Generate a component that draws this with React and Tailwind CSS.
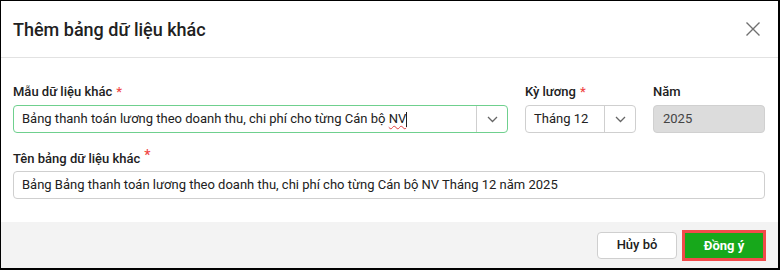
import React from 'react';

const Chevron = () => (
  <svg width="11" height="7" viewBox="0 0 11 7" fill="none">
    <path d="M1 1 L5.5 5.5 L10 1" stroke="#666" strokeWidth="1.3" />
  </svg>
);

const Label = ({ children, required }) => (
  <div className="text-[13px] leading-[18px] font-medium text-[#212121] mb-[4px] h-[18px]">
    {children}
    {required && <span className="text-[#f04848] ml-[4px]">*</span>}
  </div>
);

const App = () => {
  return (
    <div
      className="w-[780px] h-[270px] bg-white border-black border-t border-l border-r-2 border-b-2 flex flex-col"
      style={{ fontFamily: 'Roboto, "Noto Sans", sans-serif' }}
    >
      {/* header */}
      <div className="h-[57px] shrink-0 border-b border-[#e2e2e2] flex items-center justify-between pl-[12px] pr-[17px]">
        <h2 className="text-[18px] font-medium text-[#212121] pt-[1px]">Thêm bảng dữ liệu khác</h2>
        <button className="p-0">
          <svg width="16" height="16" viewBox="0 0 16 16" fill="none">
            <path d="M1.5 1.5 L14.5 14.5 M14.5 1.5 L1.5 14.5" stroke="#707070" strokeWidth="1.4" />
          </svg>
        </button>
      </div>

      {/* body */}
      <div className="flex-1 pl-[12px] pr-[13px] pt-[25px]">
        <div className="flex">
          <div className="w-[495px]">
            <Label required>Mẫu dữ liệu khác</Label>
            <div className="h-[28px] flex border border-[#6fd08e] rounded-[4px] text-[13px] text-[#212121]">
              <div className="flex-1 flex items-center pl-[8px]">
                <span>
                  Bảng thanh toán lương theo doanh thu, chi phí cho từng Cán bộ{' '}
                  <span className="underline decoration-wavy decoration-[#e04040] decoration-1 underline-offset-2">NV</span>
                </span>
                <span className="w-px h-[15px] bg-[#212121]" />
              </div>
              <div className="w-[31px] border-l border-[#cfcfcf] flex items-center justify-center">
                <Chevron />
              </div>
            </div>
          </div>
          <div className="w-[111px] ml-[17px]">
            <Label required>Kỳ lương</Label>
            <div className="h-[28px] flex border border-[#cfcfcf] rounded-[4px] text-[13px] text-[#212121]">
              <div className="flex-1 flex items-center pl-[8px]">Tháng 12</div>
              <div className="w-[31px] border-l border-[#cfcfcf] flex items-center justify-center">
                <Chevron />
              </div>
            </div>
          </div>
          <div className="w-[112px] ml-[17px]">
            <Label>Năm</Label>
            <div className="h-[28px] flex items-center pl-[9px] border border-[#d0d0d0] rounded-[4px] bg-[#dcdcdc] text-[13px] text-[#444]">
              2025
            </div>
          </div>
        </div>

        <div className="mt-[16px]">
          <div className="text-[13px] leading-[18px] font-medium text-[#212121] mb-[4px] h-[18px]">
            Tên bảng dữ liệu khác
            <span className="text-[#f04848] text-[14px] ml-[4px] relative top-[-3px]">*</span>
          </div>
          <div className="h-[28px] flex items-center pl-[8px] border border-[#cfcfcf] rounded-[4px] text-[13px] text-[#212121]">
            Bảng Bảng thanh toán lương theo doanh thu, chi phí cho từng Cán bộ NV Tháng 12 năm 2025
          </div>
        </div>
      </div>

      {/* footer */}
      <div className="h-[46px] shrink-0 bg-[#f3f3f3] flex items-center justify-end pr-[12px] gap-[5px]">
        <button className="w-[80px] h-[27px] bg-white border border-[#cfcfcf] rounded-[4px] text-[13px] font-medium text-[#212121]">
          Hủy bỏ
        </button>
        <div className="border-[3px] border-[#f24a4a] w-[84px] h-[31px]">
          <button className="w-full h-full bg-[#17a81b] text-white text-[13px] font-bold">
            Đồng ý
          </button>
        </div>
      </div>
    </div>
  );
};

export default App;
